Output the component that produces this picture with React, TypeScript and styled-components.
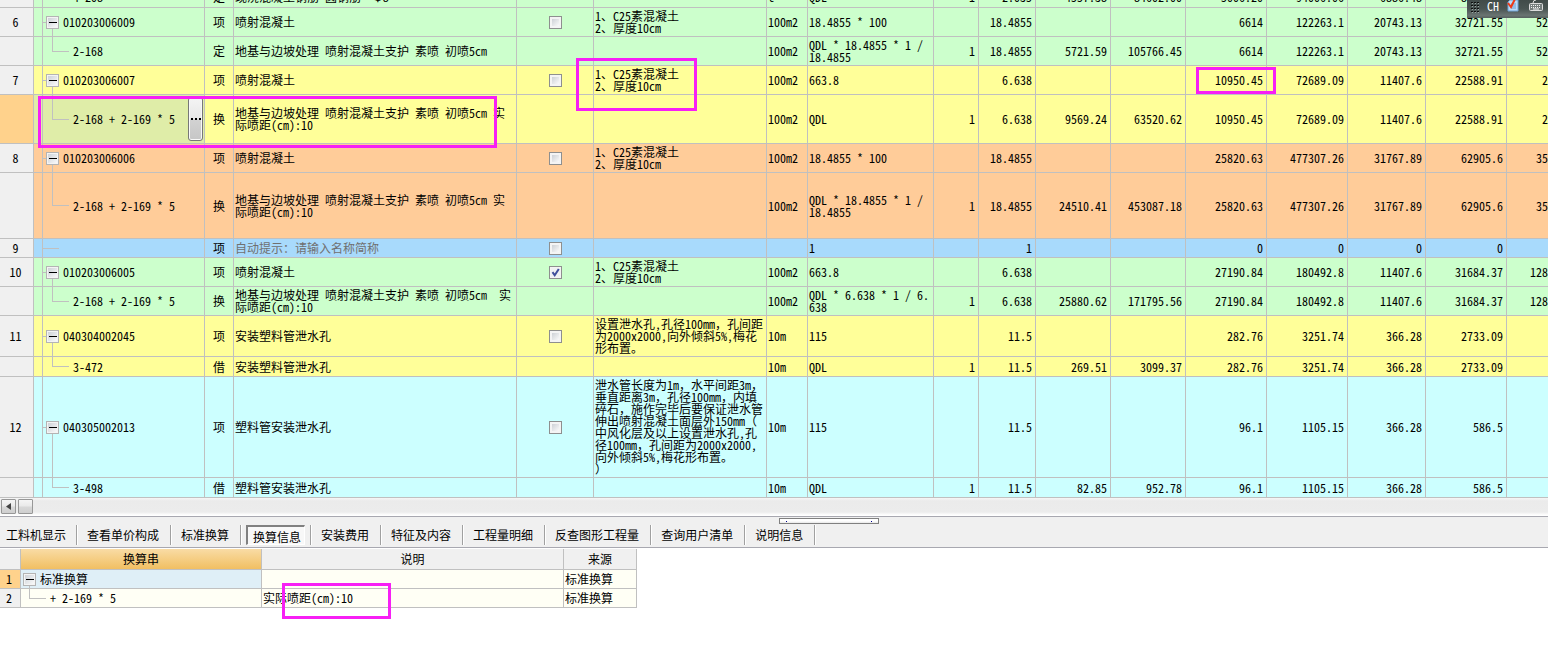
import React from "react";
import styled, { createGlobalStyle, css } from "styled-components";

const LINE = "#c0c0c0";
const PINK = "#f71ff5";

const GlobalStyle = createGlobalStyle`
  * { box-sizing: border-box; }
  body {
    margin: 0;
    background: #fff;
    color: #000;
    font: 12px/12px "Noto Sans CJK SC", "Liberation Sans", sans-serif;
    font-feature-settings: "hwid" 1;
    overflow: hidden;
  }
  button, input {
    font: inherit;
    font-feature-settings: inherit;
    color: inherit;
    margin: 0;
    padding: 0;
  }
`;

const Page = styled.main`
  position: relative;
  min-height: 100vh;
`;

const GridPane = styled.section`
  overflow: hidden;
`;

const BillTable = styled.table`
  width: 100%;
  margin-top: -14px;
  table-layout: fixed;
  border-collapse: separate;
  border-spacing: 0;
`;

const Row = styled.tr<{ $tone: string; $height: number }>`
  height: ${(p) => p.$height}px;
  background: ${(p) => p.$tone};
`;

const Cell = styled.td<{ $align?: "left" | "center" | "right"; $muted?: boolean; $tint?: string }>`
  padding: 0 ${(p) => (p.$align === "right" ? 3 : 0)}px 0 ${(p) => (p.$align === "center" ? 0 : 1)}px;
  border-right: 1px solid ${LINE};
  border-bottom: 1px solid ${LINE};
  text-align: ${(p) => p.$align ?? "left"};
  vertical-align: middle;
  white-space: pre;
  color: ${(p) => (p.$muted ? "#707070" : "#000")};
  background-color: ${(p) => p.$tint ?? "transparent"};
`;

const EdgeCell = styled(Cell)`
  padding-right: 0;
  border-right: 0;
`;

const WideMark = styled.span`
  font-feature-settings: "hwid" 0;
`;

const RowHead = styled.th<{ $active?: boolean }>`
  padding: 0 2px 0 0;
  border-right: 1px solid ${LINE};
  border-bottom: 1px solid ${LINE};
  background: ${(p) => (p.$active ? "#ffd28c" : "#f0f0f0")};
  font-weight: 400;
  text-align: center;
  vertical-align: middle;
`;

type Branch = "parent" | "child" | "leaf";

const stroke = `linear-gradient(${LINE}, ${LINE})`;
const branches = {
  parent: css`
    background-image: ${stroke}, ${stroke};
    background-position: 9px 100%, 0 50%;
    background-size: 1px 50%, 3px 1px;
  `,
  child: css`
    background-image: ${stroke}, ${stroke};
    background-position: 9px 0, 9px 50%;
    background-size: 1px 50%, 17px 1px;
  `,
  leaf: css`
    background-image: ${stroke};
    background-position: 0 50%;
    background-size: 16px 1px;
  `,
};

const TreeCell = styled(Cell)<{ $branch: Branch }>`
  padding: 0;
  background-repeat: no-repeat;
  ${(p) => branches[p.$branch]}
`;

const TreeRow = styled.div<{ $indent: number }>`
  display: flex;
  align-items: center;
  gap: 4px;
  padding-left: ${(p) => p.$indent}px;
`;

const CodeText = styled.span`
  flex: 1;
`;

const Toggle = styled.button`
  display: flex;
  align-items: center;
  justify-content: center;
  width: 13px;
  height: 13px;
  border: 1px solid #b4b4b4;
  background: linear-gradient(135deg, #c9ced4, #fdfdfd);
  box-shadow: inset 0 0 0 1px #f4f4f4;
  &::before {
    content: "";
    width: 8px;
    height: 1px;
    background: #000;
  }
`;

const MoreButton = styled.button`
  display: flex;
  align-items: center;
  justify-content: center;
  gap: 2px;
  width: 15px;
  height: 44px;
  margin-right: 1px;
  border: 1px solid #777;
  border-radius: 3px;
  background: linear-gradient(#f4f4f4, #e8e8e8 48%, #d2d2d2 52%, #c6c6c6);
  box-shadow: inset 0 0 0 1px #f8f8f8;
`;

const Dot = styled.i`
  width: 2px;
  height: 2px;
  background: #000;
`;

const Tick = styled.input`
  appearance: none;
  display: block;
  width: 13px;
  height: 13px;
  margin: 0 auto;
  border: 1px solid #8e8f8f;
  background: linear-gradient(135deg, #cdd1d6, #fafafa) center / 7px 7px no-repeat, #f4f4f4;
  box-shadow: inset 0 0 0 1px #f4f4f4;
  &:checked {
    background: url("data:image/svg+xml,%3Csvg xmlns='http://www.w3.org/2000/svg' viewBox='0 0 11 11'%3E%3Cpath d='M2.5 5.2L4.7 8.3L8.8 2' fill='none' stroke='%23404f9c' stroke-width='2'/%3E%3C/svg%3E") center / 11px 11px, #f0f1f3;
  }
`;

const ScrollTrack = styled.div`
  display: flex;
  gap: 2px;
  height: 19px;
  padding: 1px 1px 0;
  border-bottom: 1px solid #a8a8b0;
  background: linear-gradient(#f6f6f6, #ebebeb 3px, #ececec 14px, #fff 17px);
`;

const ScrollButton = styled.button`
  display: flex;
  align-items: center;
  justify-content: center;
  width: 15px;
  height: 15px;
  border: 1px solid #979797;
  border-radius: 1px;
  background: linear-gradient(#f5f5f5, #e9e9e9 48%, #d8d8d8 52%, #cfcfcf);
`;

const TabBar = styled.div`
  position: relative;
  display: flex;
  align-items: flex-start;
  height: 31px;
  padding-top: 8px;
  border-bottom: 1px solid #a8a8b0;
  background: #f0f0f0;
`;

const TabSlot = styled.div<{ $first?: boolean; $active?: boolean }>`
  display: flex;
  height: 20px;
  padding: 0 ${(p) => (p.$active ? 5 : p.$first ? 10 : 11)}px 0 ${(p) => (p.$first ? 6 : p.$active ? 5 : 10)}px;
  border-right: 1px solid #a0a0a0;
  box-shadow: 1px 0 #fff;
`;

const Tab = styled.button<{ $active: boolean }>`
  height: 20px;
  border: 0;
  background: none;
  white-space: nowrap;
  ${(p) =>
    p.$active &&
    css`
      padding: 2px 3px 0 5px;
      border: 1px solid #fff;
      border-top: 2px solid #808080;
      border-left: 2px solid #808080;
      background: #f8f8f8;
    `}
`;

const Splitter = styled.div`
  position: absolute;
  top: 1px;
  left: 779px;
  display: flex;
  align-items: center;
  justify-content: space-between;
  width: 100px;
  height: 6px;
  padding: 0 6px;
  border: 1px solid #808080;
  background: linear-gradient(#fff 50%, #e8e8e8);
`;

const Grip = styled.i`
  width: 1px;
  height: 1px;
  background: #00008b;
`;

const DetailTable = styled.table`
  width: 637px;
  margin-top: 1px;
  table-layout: fixed;
  border-collapse: separate;
  border-spacing: 0;
`;

const HeadCell = styled.th<{ $active?: boolean }>`
  padding: 0;
  border-right: 1px solid ${LINE};
  border-bottom: 1px solid ${LINE};
  background: ${(p) => (p.$active ? "linear-gradient(#f9dca5, #f1bf62)" : "#f0f0f0")};
  font-weight: 400;
`;

const DetailTree = styled(Cell)<{ $child?: boolean }>`
  padding: 0;
  background-repeat: no-repeat;
  background-image: ${stroke}, ${stroke};
  background-position: ${(p) => (p.$child ? "8px 0, 8px 50%" : "8px 100%, 8px 50%")};
  background-size: 1px 50%, ${(p) => (p.$child ? 17 : 1)}px 1px;
`;

const Mark = styled.div<{ $x: number; $y: number; $w: number; $h: number }>`
  position: absolute;
  left: ${(p) => p.$x}px;
  top: ${(p) => p.$y}px;
  width: ${(p) => p.$w}px;
  height: ${(p) => p.$h}px;
  border: 3px solid ${PINK};
  pointer-events: none;
`;

const LanguageBar = styled.aside`
  position: absolute;
  top: 0;
  right: 0;
  display: flex;
  align-items: flex-start;
  width: 81px;
  height: 18px;
  overflow: hidden;
  color: #fff;
  background: linear-gradient(#414b49, #4a5553 50%, #6a7472 85%, #56605e);
`;

const LanguageName = styled.span`
  width: 24px;
  padding-left: 4px;
`;

const widths = [34, 9, 162, 29, 283, 77, 173, 41, 126, 45, 57, 75, 75, 81, 81, 78, 81];

const GREEN = "#ccffcc";
const YELLOW = "#ffff99";
const ORANGE = "#ffcc99";
const BLUE = "#a8dafc";
const CYAN = "#ccffff";

interface Item {
  no?: string;
  height: number;
  tone: string;
  branch: Branch;
  code: string;
  kind: string;
  name: string;
  checked?: boolean;
  feature?: string;
  unit: string;
  expr: string;
  nums: string[];
  selected?: boolean;
  hint?: boolean;
}

const concrete = "1、C25素混凝土\n2、厚度10cm";
const spray = "地基与边坡处理 喷射混凝土支护 素喷 初喷5㎝";

const items: Item[] = [
  { height: 22, tone: GREEN, branch: "child", code: "4-208", kind: "定", name: "现浇混凝土钢筋 圆钢筋  Φ8", unit: "t", expr: "QDL", nums: ["1", "2.035", "4557.38", "84602.00", "5006.20", "94006.06", "6886.48", "8608.10", ""] },
  { no: "6", height: 29, tone: GREEN, branch: "parent", code: "010203006009", kind: "项", name: "喷射混凝土", checked: false, feature: concrete, unit: "100m2", expr: "18.4855 * 100", nums: ["", "18.4855", "", "", "6614", "122263.1", "20743.13", "32721.55", "52"] },
  { height: 29, tone: GREEN, branch: "child", code: "2-168", kind: "定", name: spray, unit: "100m2", expr: "QDL * 18.4855 * 1 /\n18.4855", nums: ["1", "18.4855", "5721.59", "105766.45", "6614", "122263.1", "20743.13", "32721.55", "52"] },
  { no: "7", height: 29, tone: YELLOW, branch: "parent", code: "010203006007", kind: "项", name: "喷射混凝土", checked: false, feature: concrete, unit: "100m2", expr: "663.8", nums: ["", "6.638", "", "", "10950.45", "72689.09", "11407.6", "22588.91", "2"] },
  { height: 49, tone: YELLOW, branch: "child", code: "2-168 + 2-169 * 5", kind: "换", name: spray + " 实\n际喷距(cm):10", unit: "100m2", expr: "QDL", nums: ["1", "6.638", "9569.24", "63520.62", "10950.45", "72689.09", "11407.6", "22588.91", "2"], selected: true },
  { no: "8", height: 29, tone: ORANGE, branch: "parent", code: "010203006006", kind: "项", name: "喷射混凝土", checked: false, feature: concrete, unit: "100m2", expr: "18.4855 * 100", nums: ["", "18.4855", "", "", "25820.63", "477307.26", "31767.89", "62905.6", "35"] },
  { height: 66, tone: ORANGE, branch: "child", code: "2-168 + 2-169 * 5", kind: "换", name: spray + " 实\n际喷距(cm):10", unit: "100m2", expr: "QDL * 18.4855 * 1 /\n18.4855", nums: ["1", "18.4855", "24510.41", "453087.18", "25820.63", "477307.26", "31767.89", "62905.6", "35"] },
  { no: "9", height: 19, tone: BLUE, branch: "leaf", code: "", kind: "项", name: "自动提示：请输入名称简称", checked: false, unit: "", expr: "1", nums: ["", "1", "", "", "0", "0", "0", "0", ""], hint: true },
  { no: "10", height: 29, tone: GREEN, branch: "parent", code: "010203006005", kind: "项", name: "喷射混凝土", checked: true, feature: concrete, unit: "100m2", expr: "663.8", nums: ["", "6.638", "", "", "27190.84", "180492.8", "11407.6", "31684.37", "128"] },
  { height: 29, tone: GREEN, branch: "child", code: "2-168 + 2-169 * 5", kind: "换", name: spray + "  实\n际喷距(cm):10", unit: "100m2", expr: "QDL * 6.638 * 1 / 6.\n638", nums: ["1", "6.638", "25880.62", "171795.56", "27190.84", "180492.8", "11407.6", "31684.37", "128"] },
  { no: "11", height: 41, tone: YELLOW, branch: "parent", code: "040304002045", kind: "项", name: "安装塑料管泄水孔", checked: false, feature: "设置泄水孔,孔径100mm，孔间距\n为2000x2000,向外倾斜5%,梅花\n形布置。", unit: "10m", expr: "115", nums: ["", "11.5", "", "", "282.76", "3251.74", "366.28", "2733.09", ""] },
  { height: 20, tone: YELLOW, branch: "child", code: "3-472", kind: "借", name: "安装塑料管泄水孔", unit: "10m", expr: "QDL", nums: ["1", "11.5", "269.51", "3099.37", "282.76", "3251.74", "366.28", "2733.09", ""] },
  { no: "12", height: 101, tone: CYAN, branch: "parent", code: "040305002013", kind: "项", name: "塑料管安装泄水孔", checked: false, feature: "泄水管长度为1m，水平间距3m，\n垂直距离3m，孔径100mm，内填\n碎石，施作完毕后要保证泄水管\n伸出喷射混凝土面层外150mm（\n中风化层及以上设置泄水孔,孔\n径100mm，孔间距为2000x2000,\n向外倾斜5%,梅花形布置。\n）", unit: "10m", expr: "115", nums: ["", "11.5", "", "", "96.1", "1105.15", "366.28", "586.5", ""] },
  { height: 20, tone: CYAN, branch: "child", code: "3-498", kind: "借", name: "塑料管安装泄水孔", unit: "10m", expr: "QDL", nums: ["1", "11.5", "82.85", "952.78", "96.1", "1105.15", "366.28", "586.5", ""] },
];

const tabs = ["工料机显示", "查看单价构成", "标准换算", "换算信息", "安装费用", "特征及内容", "工程量明细", "反查图形工程量", "查询用户清单", "说明信息"];
const activeTab = "换算信息";

// Full-width commas and brackets keep their own width beside half-width Latin.
function MixedText({ children }: { children: string }) {
  return (
    <>
      {children.split(/([，（）])/).map((part, i) =>
        i % 2 ? <WideMark key={i}>{part}</WideMark> : part,
      )}
    </>
  );
}

function BillRow({ item }: { item: Item }) {
  const tint = item.selected ? "#dfeda8" : undefined;
  return (
    <Row $tone={item.tone} $height={item.height}>
      <RowHead scope="row" $active={item.selected}>{item.no}</RowHead>
      <Cell $tint={tint} />
      <TreeCell $branch={item.branch} $tint={tint}>
        <TreeRow $indent={item.branch === "child" ? 30 : 3}>
          {item.branch === "parent" && <Toggle aria-label={`折叠 ${item.code}`} />}
          <CodeText>{item.code}</CodeText>
          {item.selected && (
            <MoreButton aria-label="更多"><Dot /><Dot /><Dot /></MoreButton>
          )}
        </TreeRow>
      </TreeCell>
      <Cell $align="center">{item.kind}</Cell>
      <Cell $muted={item.hint}>{item.name}</Cell>
      <Cell $align="center">
        {item.checked !== undefined && (
          <Tick type="checkbox" defaultChecked={item.checked} aria-label={`选择 ${item.no}`} />
        )}
      </Cell>
      <Cell>{item.feature && <MixedText>{item.feature}</MixedText>}</Cell>
      <Cell>{item.unit}</Cell>
      <Cell>{item.expr}</Cell>
      {item.nums.slice(0, 8).map((n, i) => (
        <Cell key={i} $align="right">{n}</Cell>
      ))}
      <EdgeCell $align="right">{item.nums[8]}</EdgeCell>
    </Row>
  );
}

function LanguageTools() {
  return (
    <LanguageBar>
      <svg width="16" height="18" viewBox="0 0 16 18" aria-hidden="true">
        {[2, 5, 8, 11].map((y) =>
          [4, 7, 10].map((x) => (
            <g key={`${x}-${y}`}>
              <rect x={x} y={y} width="2" height="1" fill="#111" />
              <rect x={x + 1} y={y + 1} width="1" height="1" fill="#9aa3a1" />
            </g>
          )),
        )}
      </svg>
      <LanguageName>CH</LanguageName>
      <svg width="41" height="18" viewBox="0 0 41 18" aria-hidden="true">
        <path d="M3 0h8v11H1V2z" fill="#bcdcf7" stroke="#6fa3d4" />
        <path d="M4 4h5M4 6h5M4 8h5" stroke="#6d9fd6" />
        <path d="M1 3l3 4 4-8" fill="none" stroke="#f03a17" strokeWidth="2" />
        <path d="M26 3q0-3 3-3" fill="none" stroke="#ddd" />
        <rect x="22.500" y="3.500" width="13" height="7" rx="1" fill="#777f7e" stroke="#dcdcdc" />
        <path d="M24 5.500h10M24 7.500h10" stroke="#f4f4f4" strokeDasharray="1 1" />
        <path d="M26 9h6" stroke="#f4f4f4" />
      </svg>
    </LanguageBar>
  );
}

export default function App() {
  return (
    <Page>
      <GlobalStyle />
      <GridPane>
        <BillTable>
          <colgroup>
            {widths.map((w, i) => <col key={i} width={w} />)}
            <col />
          </colgroup>
          <tbody>
            {items.map((item, i) => <BillRow key={i} item={item} />)}
          </tbody>
        </BillTable>
      </GridPane>

      <ScrollTrack>
        <ScrollButton aria-label="向左滚动">
          <svg width="5" height="7" viewBox="0 0 5 7"><path d="M5 0v7L0 3.500z" fill="#444" /></svg>
        </ScrollButton>
        <ScrollButton aria-label="滚动条" />
      </ScrollTrack>

      <TabBar role="tablist">
        {tabs.map((label, i) => (
          <TabSlot key={label} $first={i === 0} $active={label === activeTab}>
            <Tab role="tab" aria-selected={label === activeTab} $active={label === activeTab}>{label}</Tab>
          </TabSlot>
        ))}
        <Splitter><Grip /><Grip /></Splitter>
      </TabBar>

      <DetailTable>
        <colgroup>
          <col width={21} /><col width={241} /><col width={302} /><col width={73} />
        </colgroup>
        <thead>
          <Row $tone="#f0f0f0" $height={21}>
            <HeadCell />
            <HeadCell $active>换算串</HeadCell>
            <HeadCell>说明</HeadCell>
            <HeadCell>来源</HeadCell>
          </Row>
        </thead>
        <tbody>
          <Row $tone="#fffff5" $height={19}>
            <RowHead scope="row" $active>1</RowHead>
            <DetailTree $tint="#dfeff7">
              <TreeRow $indent={2}><Toggle aria-label="折叠 标准换算" />标准换算</TreeRow>
            </DetailTree>
            <Cell />
            <Cell>标准换算</Cell>
          </Row>
          <Row $tone="#fffff5" $height={19}>
            <RowHead scope="row">2</RowHead>
            <DetailTree $child><TreeRow $indent={29}>+ 2-169 * 5</TreeRow></DetailTree>
            <Cell>实际喷距(cm):10</Cell>
            <Cell>标准换算</Cell>
          </Row>
        </tbody>
      </DetailTable>

      <Mark $x={38} $y={96} $w={459} $h={52} />
      <Mark $x={576} $y={58} $w={121} $h={53} />
      <Mark $x={1196} $y={67} $w={80} $h={27} />
      <Mark $x={282} $y={583} $w={109} $h={36} />
      <LanguageTools />
    </Page>
  );
}
